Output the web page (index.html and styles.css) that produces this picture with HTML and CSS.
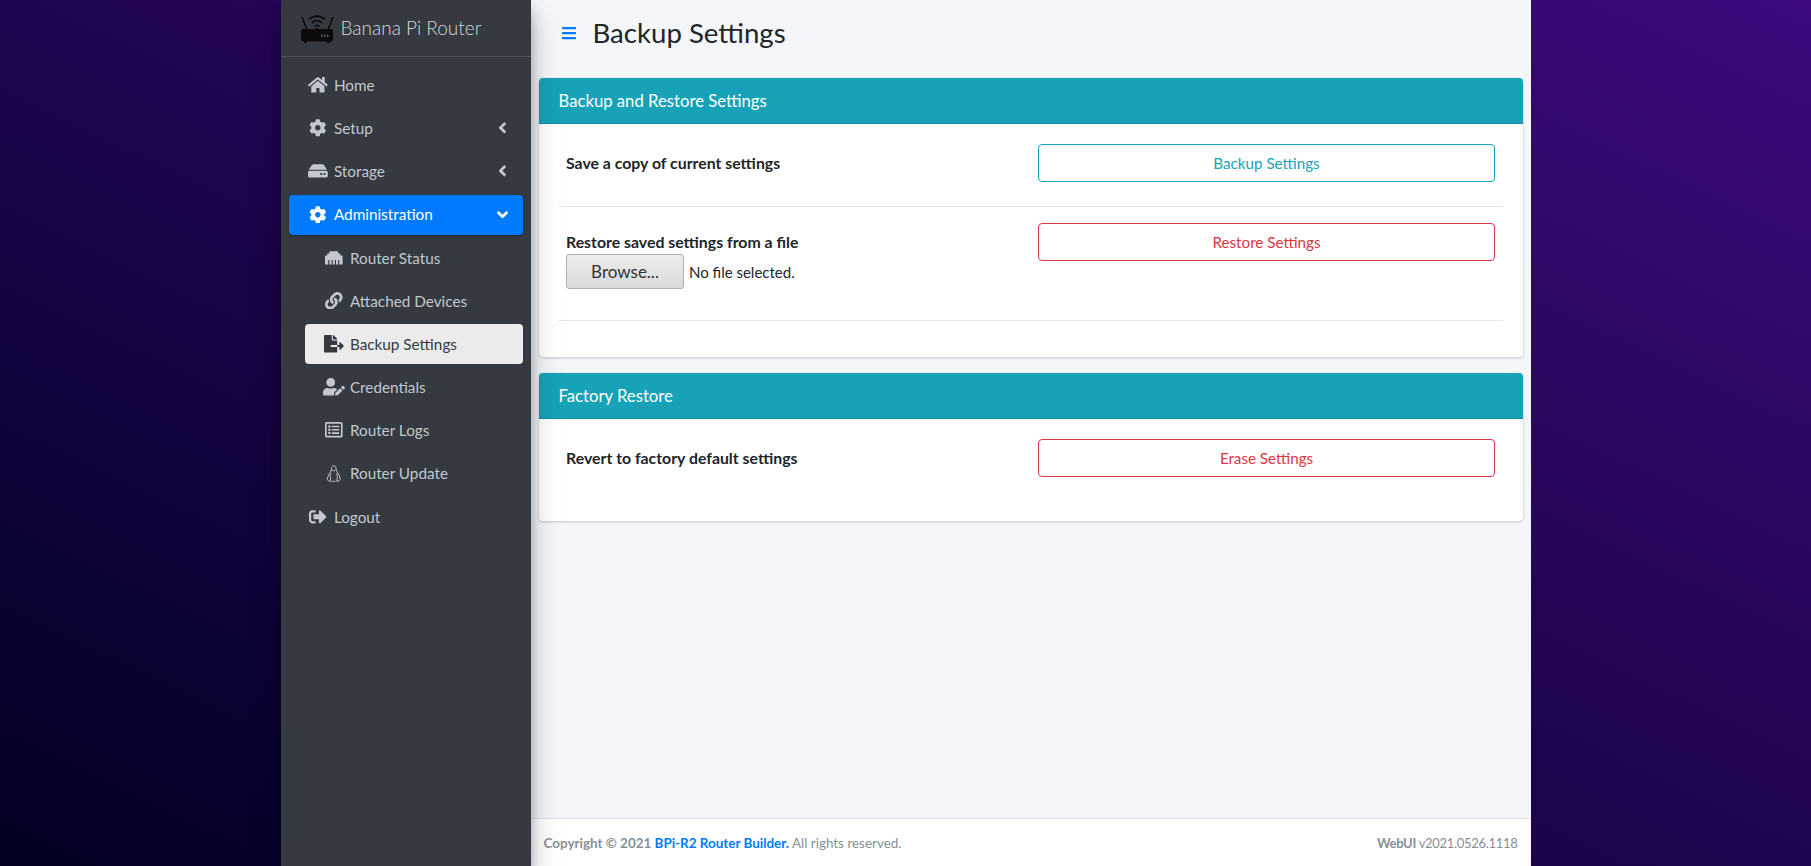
FILE: index.html
```html
<!DOCTYPE html>
<html lang="en">
<head>
  <meta charset="UTF-8">
  <title>Backup Settings</title>
  <link rel="stylesheet" href="styles.css">
</head>
<body>
  <div class="wrapper">

    <!-- sidebar -->
    <aside class="sidebar">
      <a class="brand" href="#">
        <svg class="brand-logo" viewBox="0 0 36 32">
          <path class="logo-line" d="M3 5l5 13M34 5l-5 13"/>
          <path class="logo-arc" d="M10 7.5c4.5-4.5 11.5-4.5 16 0M12.8 11c3-3 7.4-3 10.4 0M15.5 14.5c1.5-1.5 3.5-1.5 5 0"/>
          <circle class="logo-body" cx="18" cy="17" r="1.3"/>
          <rect class="logo-body" x="2" y="17" width="32" height="12.5" rx="2"/>
          <path class="logo-body" d="M5 29h3v2H5zM28 29h3v2h-3z"/>
          <path class="logo-led" d="M22 22.5h1.4v2.4H22zM25 22.5h1.4v2.4H25zM28 22.5h1.4v2.4H28z"/>
        </svg>
        <span class="brand-text">Banana Pi Router</span>
      </a>
      <nav class="nav">
        <a class="nav-link" href="#">
          <span class="nav-icon"><svg viewBox="0 0 576 512"><path d="M280.37 148.26L96 300.11V464a16 16 0 0 0 16 16l112.06-.29a16 16 0 0 0 15.92-16V368a16 16 0 0 1 16-16h64a16 16 0 0 1 16 16v95.64a16 16 0 0 0 16 16.05L464 480a16 16 0 0 0 16-16V300L295.67 148.26a12.19 12.19 0 0 0-15.3 0zM571.6 251.47L488 182.56V44.05a12 12 0 0 0-12-12h-56a12 12 0 0 0-12 12v72.61L318.47 43a48 48 0 0 0-61 0L4.34 251.47a12 12 0 0 0-1.6 16.9l25.5 31A12 12 0 0 0 45.15 301l235.22-193.74a12.19 12.19 0 0 1 15.3 0L530.9 301a12 12 0 0 0 16.9-1.6l25.5-31a12 12 0 0 0-1.7-16.93z"/></svg></span>
          Home
        </a>
        <a class="nav-link" href="#">
          <span class="nav-icon"><svg viewBox="0 0 512 512"><path d="M487.4 315.7l-42.6-24.6c4.3-23.2 4.3-47 0-70.2l42.6-24.6c4.9-2.8 7.1-8.6 5.5-14-11.1-35.6-30-67.8-54.7-94.6-3.8-4.1-10-5.1-14.8-2.3L380.8 110c-17.9-15.4-38.5-27.3-60.8-35.1V25.8c0-5.6-3.9-10.5-9.4-11.7-36.7-8.2-74.3-7.8-109.2 0-5.5 1.2-9.4 6.1-9.4 11.7V75c-22.2 7.9-42.8 19.8-60.8 35.1L88.7 85.5c-4.9-2.8-11-1.9-14.8 2.3-24.7 26.7-43.6 58.9-54.7 94.6-1.7 5.4.6 11.2 5.5 14L67.3 221c-4.3 23.2-4.3 47 0 70.2l-42.6 24.6c-4.9 2.8-7.1 8.6-5.5 14 11.1 35.6 30 67.8 54.7 94.6 3.8 4.1 10 5.1 14.8 2.3l42.6-24.6c17.9 15.4 38.5 27.3 60.8 35.1v49.2c0 5.6 3.9 10.5 9.4 11.7 36.7 8.2 74.3 7.8 109.2 0 5.5-1.2 9.4-6.1 9.4-11.7v-49.2c22.2-7.9 42.8-19.8 60.8-35.1l42.6 24.6c4.9 2.8 11 1.9 14.8-2.3 24.7-26.7 43.6-58.9 54.7-94.6 1.5-5.5-.7-11.3-5.6-14.1zM256 336c-44.1 0-80-35.9-80-80s35.9-80 80-80 80 35.9 80 80-35.9 80-80 80z"/></svg></span>
          Setup
          <svg class="nav-arrow" viewBox="0 0 256 512"><path d="M31.7 239l136-136c9.4-9.4 24.6-9.4 33.9 0l22.6 22.6c9.4 9.4 9.4 24.6 0 33.9L127.9 256l96.4 96.4c9.4 9.4 9.4 24.6 0 33.9L201.7 409c-9.4 9.4-24.6 9.4-33.9 0l-136-136c-9.5-9.4-9.5-24.6-.1-34z"/></svg>
        </a>
        <a class="nav-link" href="#">
          <span class="nav-icon"><svg viewBox="0 0 576 512"><path d="M576 304v96c0 26.51-21.49 48-48 48H48c-26.51 0-48-21.49-48-48v-96c0-26.51 21.49-48 48-48h480c26.51 0 48 21.49 48 48zm-48-80a79.557 79.557 0 0 1 30.777 6.165L462.25 85.374A48.003 48.003 0 0 0 422.311 64H153.689a48 48 0 0 0-39.938 21.374L17.223 230.165A79.557 79.557 0 0 1 48 224h480zm-48 96c-17.673 0-32 14.327-32 32s14.327 32 32 32 32-14.327 32-32-14.327-32-32-32zm-96 0c-17.673 0-32 14.327-32 32s14.327 32 32 32 32-14.327 32-32-14.327-32-32-32z"/></svg></span>
          Storage
          <svg class="nav-arrow" viewBox="0 0 256 512"><path d="M31.7 239l136-136c9.4-9.4 24.6-9.4 33.9 0l22.6 22.6c9.4 9.4 9.4 24.6 0 33.9L127.9 256l96.4 96.4c9.4 9.4 9.4 24.6 0 33.9L201.7 409c-9.4 9.4-24.6 9.4-33.9 0l-136-136c-9.5-9.4-9.5-24.6-.1-34z"/></svg>
        </a>
        <a class="nav-link active" href="#">
          <span class="nav-icon"><svg viewBox="0 0 512 512"><path d="M487.4 315.7l-42.6-24.6c4.3-23.2 4.3-47 0-70.2l42.6-24.6c4.9-2.8 7.1-8.6 5.5-14-11.1-35.6-30-67.8-54.7-94.6-3.8-4.1-10-5.1-14.8-2.3L380.8 110c-17.9-15.4-38.5-27.3-60.8-35.1V25.8c0-5.6-3.9-10.5-9.4-11.7-36.7-8.2-74.3-7.8-109.2 0-5.5 1.2-9.4 6.1-9.4 11.7V75c-22.2 7.9-42.8 19.8-60.8 35.1L88.7 85.5c-4.9-2.8-11-1.9-14.8 2.3-24.7 26.7-43.6 58.9-54.7 94.6-1.7 5.4.6 11.2 5.5 14L67.3 221c-4.3 23.2-4.3 47 0 70.2l-42.6 24.6c-4.9 2.8-7.1 8.6-5.5 14 11.1 35.6 30 67.8 54.7 94.6 3.8 4.1 10 5.1 14.8 2.3l42.6-24.6c17.9 15.4 38.5 27.3 60.8 35.1v49.2c0 5.6 3.9 10.5 9.4 11.7 36.7 8.2 74.3 7.8 109.2 0 5.5-1.2 9.4-6.1 9.4-11.7v-49.2c22.2-7.9 42.8-19.8 60.8-35.1l42.6 24.6c4.9 2.8 11 1.9 14.8-2.3 24.7-26.7 43.6-58.9 54.7-94.6 1.5-5.5-.7-11.3-5.6-14.1zM256 336c-44.1 0-80-35.9-80-80s35.9-80 80-80 80 35.9 80 80-35.9 80-80 80z"/></svg></span>
          Administration
          <svg class="nav-arrow down" viewBox="0 0 320 512"><path d="M143 352.3L7 216.3c-9.4-9.4-9.4-24.6 0-33.9l22.6-22.6c9.4-9.4 24.6-9.4 33.9 0l96.4 96.4 96.4-96.4c9.4-9.4 24.6-9.4 33.9 0l22.6 22.6c9.4 9.4 9.4 24.6 0 33.9l-136 136c-9.2 9.4-24.4 9.4-33.8 0z"/></svg>
        </a>
        <a class="nav-link sub" href="#">
          <span class="nav-icon"><svg viewBox="0 0 512 512"><path d="M496 192h-48v-48c0-8.8-7.2-16-16-16h-48V80c0-8.8-7.2-16-16-16H144c-8.8 0-16 7.2-16 16v48H80c-8.8 0-16 7.2-16 16v48H16c-8.8 0-16 7.2-16 16v224c0 8.8 7.2 16 16 16h80V320h32v128h64V320h32v128h64V320h32v128h64V320h32v128h80c8.8 0 16-7.2 16-16V208c0-8.8-7.2-16-16-16z"/></svg></span>
          Router Status
        </a>
        <a class="nav-link sub" href="#">
          <span class="nav-icon"><svg viewBox="0 0 512 512"><path d="M326.612 185.391c59.747 59.809 58.927 155.698.36 214.59-.11.12-.24.25-.36.37l-67.2 67.2c-59.27 59.27-155.699 59.262-214.96 0-59.27-59.26-59.27-155.7 0-214.96l37.106-37.106c9.84-9.84 26.786-3.3 27.294 10.606.648 17.722 3.826 35.527 9.69 52.721 1.986 5.822.567 12.262-3.783 16.612l-13.087 13.087c-28.026 28.026-28.905 73.66-1.155 101.96 28.024 28.579 74.086 28.749 102.325.51l67.2-67.19c28.191-28.191 28.073-73.757 0-101.83-3.701-3.694-7.429-6.564-10.341-8.569a16.037 16.037 0 0 1-6.947-12.606c-.396-10.567 3.348-21.456 11.698-29.806l21.054-21.055c5.521-5.521 14.182-6.199 20.584-1.731a152.482 152.482 0 0 1 20.522 17.197zM467.547 44.449c-59.261-59.262-155.69-59.27-214.96 0l-67.2 67.2c-.12.12-.25.25-.36.37-58.566 58.892-59.387 154.781.36 214.59a152.454 152.454 0 0 0 20.521 17.196c6.402 4.468 15.064 3.789 20.584-1.731l21.054-21.055c8.35-8.35 12.094-19.239 11.698-29.806a16.037 16.037 0 0 0-6.947-12.606c-2.912-2.005-6.64-4.875-10.341-8.569-28.073-28.073-28.191-73.639 0-101.83l67.2-67.19c28.239-28.239 74.3-28.069 102.325.51 27.75 28.3 26.872 73.934-1.155 101.96l-13.087 13.087c-4.35 4.35-5.769 10.79-3.783 16.612 5.864 17.194 9.042 34.999 9.69 52.721.509 13.906 17.454 20.446 27.294 10.606l37.106-37.106c59.271-59.259 59.271-155.699.001-214.959z"/></svg></span>
          Attached Devices
        </a>
        <a class="nav-link sub current" href="#">
          <span class="nav-icon"><svg viewBox="0 0 576 512"><path d="M384 121.9c0-6.3-2.5-12.4-7-16.9L279.1 7c-4.5-4.5-10.6-7-17-7H256v128h128zM571 308l-95.7-96.4c-10.1-10.1-27.4-3-27.4 11.3V288h-64v64h64v65.2c0 14.3 17.3 21.4 27.4 11.3L571 332c6.6-6.6 6.6-17.4 0-24zm-379 28v-32c0-8.8 7.2-16 16-16h176V160H248c-13.2 0-24-10.8-24-24V0H24C10.7 0 0 10.7 0 24v464c0 13.3 10.7 24 24 24h336c13.3 0 24-10.7 24-24V352H208c-8.8 0-16-7.2-16-16z"/></svg></span>
          Backup Settings
        </a>
        <a class="nav-link sub" href="#">
          <span class="nav-icon"><svg viewBox="0 0 640 512"><path d="M224 256c70.7 0 128-57.3 128-128S294.7 0 224 0 96 57.3 96 128s57.3 128 128 128zm89.6 32h-16.7c-22.2 10.2-46.9 16-72.9 16s-50.6-5.8-72.9-16h-16.7C60.2 288 0 348.2 0 422.4V464c0 26.5 21.5 48 48 48h274.9c-2.4-6.8-3.4-14-2.6-21.3l6.8-60.9 1.2-11.1 7.9-7.9 77.3-77.3c-24.5-27.7-60-45.5-99.9-45.5zm45.3 145.3l-6.8 61c-1.1 10.2 7.5 18.8 17.6 17.6l60.9-6.8 137.9-137.9-71.7-71.7-137.9 137.8zM633 268.9L595.1 231c-9.3-9.3-24.5-9.3-33.8 0l-37.8 37.8-4.1 4.1 71.8 71.7 41.8-41.8c9.3-9.4 9.3-24.5 0-33.9z"/></svg></span>
          Credentials
        </a>
        <a class="nav-link sub" href="#">
          <span class="nav-icon"><svg viewBox="0 0 512 512"><path d="M464 32H48C21.49 32 0 53.49 0 80v352c0 26.51 21.49 48 48 48h416c26.51 0 48-21.49 48-48V80c0-26.51-21.49-48-48-48zm-6 400H54a6 6 0 0 1-6-6V86a6 6 0 0 1 6-6h404a6 6 0 0 1 6 6v340a6 6 0 0 1-6 6zm-42-92v24c0 6.627-5.373 12-12 12H204c-6.627 0-12-5.373-12-12v-24c0-6.627 5.373-12 12-12h200c6.627 0 12 5.373 12 12zm0-96v24c0 6.627-5.373 12-12 12H204c-6.627 0-12-5.373-12-12v-24c0-6.627 5.373-12 12-12h200c6.627 0 12 5.373 12 12zm0-96v24c0 6.627-5.373 12-12 12H204c-6.627 0-12-5.373-12-12v-24c0-6.627 5.373-12 12-12h200c6.627 0 12 5.373 12 12zm-252 12c0 19.882-16.118 36-36 36s-36-16.118-36-36 16.118-36 36-36 36 16.118 36 36zm0 96c0 19.882-16.118 36-36 36s-36-16.118-36-36 16.118-36 36-36 36 16.118 36 36zm0 96c0 19.882-16.118 36-36 36s-36-16.118-36-36 16.118-36 36-36 36 16.118 36 36z"/></svg></span>
          Router Logs
        </a>
        <a class="nav-link sub" href="#">
          <span class="nav-icon"><svg viewBox="0 0 16 18"><path class="tux" d="M8 .8c-1.7 0-2.3 1.4-2.3 2.8 0 2.2-1 3.2-2 4.9C2.7 10.1 1.7 12 1.3 14.3c-.2 1 .7 1.3 1.3 1.7l2.4 1.4c.8.3 1.5-.2 1.8-.8h2.4c.3.6 1 1.1 1.8.8l2.4-1.4c.6-.4 1.5-.7 1.3-1.7-.4-2.3-1.4-4.2-2.4-5.8-1-1.7-2-2.7-2-4.9C10.3 2.2 9.7.8 8 .8zM5.2 8.5C4.3 10.3 4 12.3 5 16.4M10.8 8.5c.9 1.8 1.2 3.8.2 7.9M6.3 5l1.7 1.2L9.7 5"/></svg></span>
          Router Update
        </a>
        <a class="nav-link" href="#">
          <span class="nav-icon"><svg viewBox="0 0 512 512"><path d="M497 273L329 441c-15 15-41 4.5-41-17v-96H152c-13.3 0-24-10.7-24-24v-96c0-13.3 10.7-24 24-24h136V88c0-21.4 25.9-32 41-17l168 168c9.3 9.4 9.3 24.6 0 34zM192 436v-40c0-6.6-5.4-12-12-12H96c-17.7 0-32-14.3-32-32V160c0-17.7 14.3-32 32-32h84c6.6 0 12-5.4 12-12V76c0-6.6-5.4-12-12-12H96c-53 0-96 43-96 96v192c0 53 43 96 96 96h84c6.6 0 12-5.4 12-12z"/></svg></span>
          Logout
        </a>
      </nav>
    </aside>

    <!-- main column -->
    <div class="main">
      <header class="page-header">
        <svg class="menu-toggle" viewBox="0 0 448 512"><path d="M16 132h416c8.837 0 16-7.163 16-16V76c0-8.837-7.163-16-16-16H16C7.163 60 0 67.163 0 76v40c0 8.837 7.163 16 16 16zm0 160h416c8.837 0 16-7.163 16-16v-40c0-8.837-7.163-16-16-16H16c-8.837 0-16 7.163-16 16v40c0 8.837 7.163 16 16 16zm0 160h416c8.837 0 16-7.163 16-16v-40c0-8.837-7.163-16-16-16H16c-8.837 0-16 7.163-16 16v40c0 8.837 7.163 16 16 16z"/></svg>
        <h1 class="page-title">Backup Settings</h1>
      </header>

      <main class="content">
        <section class="card">
          <h2 class="card-header">Backup and Restore Settings</h2>
          <div class="card-body">
            <div class="row">
              <div class="col col-label"><strong>Save a copy of current settings</strong></div>
              <div class="col"><button class="btn btn-info">Backup Settings</button></div>
            </div>
            <hr class="divider">
            <div class="row">
              <div class="col col-label">
                <strong>Restore saved settings from a file</strong>
                <div class="file-field">
                  <button class="file-btn">Browse...</button>
                  <span>No file selected.</span>
                </div>
              </div>
              <div class="col"><button class="btn btn-danger">Restore Settings</button></div>
            </div>
            <hr class="divider">
          </div>
        </section>

        <section class="card">
          <h2 class="card-header">Factory Restore</h2>
          <div class="card-body">
            <div class="row">
              <div class="col col-label"><strong>Revert to factory default settings</strong></div>
              <div class="col"><button class="btn btn-danger">Erase Settings</button></div>
            </div>
          </div>
        </section>
      </main>

      <footer class="footer">
        <div><strong>Copyright © 2021 <a href="#">BPi-R2 Router Builder.</a></strong> All rights reserved.</div>
        <div class="version"><strong>WebUI</strong> v2021.0526.1118</div>
      </footer>
    </div>

  </div>
</body>
</html>
```

FILE: styles.css
```css
* { box-sizing: border-box; }

html, body { height: 100%; }

body {
  margin: 0;
  font-family: "Lato", "Noto Sans", sans-serif;
  font-size: 16px;
  line-height: 24px;
  color: #212529;
  background: linear-gradient(to top right, #020024, #3c0a7c);
  overflow: hidden;
}

a { text-decoration: none; }

.wrapper {
  display: flex;
  width: 1250px;
  height: 100%;
  margin: 0 auto;
}

/* sidebar */
.sidebar {
  flex: 0 0 250px;
  position: relative;
  z-index: 2;
  background: #343a40;
  box-shadow: 0 14px 28px rgba(0, 0, 0, .25), 0 10px 10px rgba(0, 0, 0, .22);
}

.brand {
  display: flex;
  align-items: center;
  height: 57px;
  padding: 0 0 0 18px;
  border-bottom: 1px solid #4b545c;
  color: rgba(255, 255, 255, .8);
}

.brand-logo { width: 36px; height: 32px; margin: 0 6px 0 0; flex: none; }
.logo-body { fill: #0b0b0d; }
.logo-line, .logo-arc { fill: none; stroke: #0b0b0d; stroke-width: 1.6; }
.logo-led { fill: #555b61; }
.brand-text { padding-bottom: 1px; font-size: 19px; font-weight: 300; }

.nav { padding: 8px 8px 0; }

.nav-link {
  display: flex;
  align-items: center;
  height: 40px;
  margin-bottom: 3.2px;
  padding: 0 16px .5px 16.6px;
  border-radius: 4px;
  color: #c2c7d0;
  fill: #c2c7d0;
  font-size: 15.3px;
}

.nav-link.sub { margin-left: 16px; }

.nav-link.active {
  background: #007bff;
  color: #fff;
  fill: #fff;
  box-shadow: 0 1px 3px rgba(0, 0, 0, .12), 0 1px 2px rgba(0, 0, 0, .24);
}

.nav-link.current {
  background: rgba(255, 255, 255, .9);
  color: #343a40;
  fill: #343a40;
}

.nav-icon {
  display: flex;
  justify-content: center;
  flex: 0 0 25.6px;
  margin-right: 3.2px;
}

.nav-icon svg { height: 17.6px; max-width: 23px; }

.tux {
  fill: none;
  stroke: #c2c7d0;
  stroke-width: 1;
}

.nav-arrow { height: 17.6px; width: 8.8px; margin-left: auto; }
.nav-arrow.down { width: 11px; margin-right: -1px; }

/* main column */
.main {
  flex: 1;
  display: flex;
  flex-direction: column;
  min-width: 0;
  background: #f4f6f9;
}

.page-header {
  display: flex;
  align-items: center;
  height: 78px;
  padding: 0 0 12px 31px;
}

.menu-toggle { width: 14px; height: 16px; margin-right: 17px; fill: #007bff; }

.page-title {
  margin: 0;
  font-size: 27.6px;
  font-weight: 400;
  line-height: 34px;
}

.content { flex: 1; padding: 0 8px; }

/* cards */
.card {
  margin-bottom: 16px;
  border-radius: 4px;
  background: #fff;
  box-shadow: 0 0 1px rgba(0, 0, 0, .125), 0 1px 3px rgba(0, 0, 0, .2);
}

.card-header {
  margin: 0;
  padding: 11px 20px;
  height: 46px;
  border-bottom: 1px solid rgba(0, 0, 0, .125);
  border-radius: 4px 4px 0 0;
  background: #17a2b8;
  color: #fff;
  font-size: 16.7px;
  font-weight: 400;
  line-height: 24px;
}

.card-body { padding: 20px; }

.row { display: flex; margin-bottom: 24px; }
.col { flex: 0 0 50%; padding: 0 7.5px; }
.col-label { padding-top: 7px; padding-bottom: 7px; font-size: 15.85px; }

.divider {
  margin: 0 0 16px;
  border: 0;
  border-top: 1px solid rgba(0, 0, 0, .1);
}

.file-field {
  display: flex;
  align-items: center;
  gap: 5px;
  font-size: 15px;
}

.file-btn {
  width: 118px;
  height: 35px;
  padding: 0;
  border: 1px solid #b1b1b1;
  border-radius: 3px;
  background: linear-gradient(#ededed, #d9d9d9);
  color: #333;
  font: 17px "Lato", "Noto Sans", sans-serif;
}

.btn {
  display: block;
  width: 100%;
  height: 38px;
  padding: 0 0 1px;
  border: 1px solid;
  border-radius: 4px;
  background: #fff;
  font: 15.2px "Lato", "Noto Sans", sans-serif;
}

.btn-info { border-color: #17a2b8; color: #17a2b8; }
.btn-danger { border-color: #dc3545; color: #dc3545; }

/* footer */
.footer {
  display: flex;
  justify-content: space-between;
  align-items: center;
  height: 48px;
  padding: 0 13px;
  border-top: 1px solid #dee2e6;
  background: #fff;
  color: #869099;
  font-size: 13.45px;
}

.version { font-size: 13px; letter-spacing: -.3px; }

.footer a { color: #007bff; }
```
